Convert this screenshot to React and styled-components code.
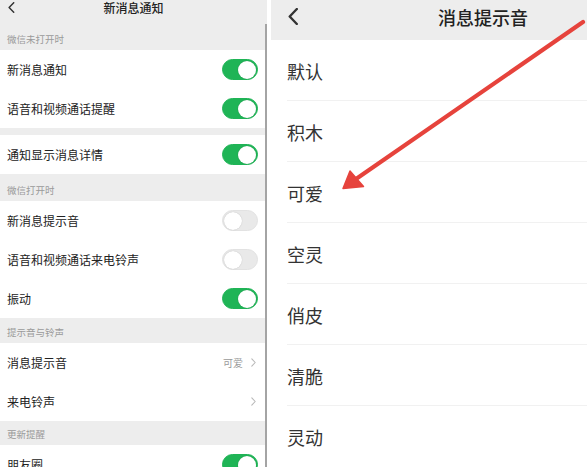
import React from 'react'
import styled, { createGlobalStyle } from 'styled-components';

const GlobalStyle = createGlobalStyle`
  html, body {
    margin: 0;
    padding: 0;
    background: #fff;
    font-family: "Noto Sans CJK SC", "Noto Sans", sans-serif;
  }
`;

const leftSections = [
  { label: '微信未打开时', h: 26, rows: [
    { text: '新消息通知', toggle: true },
    { text: '语音和视频通话提醒', toggle: true },
  ]},
  { gap: true, rows: [
    { text: '通知显示消息详情', toggle: true },
  ]},
  { label: '微信打开时', h: 27, rows: [
    { text: '新消息提示音', toggle: false },
    { text: '语音和视频通话来电铃声', toggle: false },
    { text: '振动', toggle: true },
  ]},
  { label: '提示音与铃声', h: 25, rows: [
    { text: '消息提示音', value: '可爱', link: true },
    { text: '来电铃声', link: true },
  ]},
  { label: '更新提醒', h: 24, rows: [
    { text: '朋友圈', toggle: true },
  ]},
];

const tones = ['默认', '积木', '可爱', '空灵', '俏皮', '清脆', '灵动'];

const Chevron = ({ size = 10, color = '#333', width = 1.6 }) => (
  <svg width={size * 0.6} height={size} viewBox="0 0 6 10" fill="none">
    <path d="M5.2 0.6 L1 5 L5.2 9.4" stroke={color} strokeWidth={width} strokeLinecap="round" strokeLinejoin="round"/>
  </svg>
);

const SmallArrow = () => (
  <svg width="5" height="9" viewBox="0 0 5 9" fill="none">
    <path d="M0.8 0.8 L4.2 4.5 L0.8 8.2" stroke="#b8b8b8" strokeWidth="1.1" strokeLinecap="round" strokeLinejoin="round"/>
  </svg>
);

const App = () => {
  return (
    <Page>
      <GlobalStyle />
      <LeftPanel>
        <LeftHeader>
          <BackLeft><Chevron size={11} color="#333" width={1.3} /></BackLeft>
          <LeftTitle>新消息通知</LeftTitle>
        </LeftHeader>
        <LeftBody>
          <SettingsList>
            {leftSections.map((section, i) => (
              <React.Fragment key={i}>
                {section.gap ? <Gap /> : <SectionLabel $h={section.h}>{section.label}</SectionLabel>}
                {section.rows.map((row) => (
                  <Row key={row.text}>
                    <RowText>{row.text}</RowText>
                    {row.toggle !== undefined && (
                      <Toggle $on={row.toggle}><Knob $on={row.toggle} /></Toggle>
                    )}
                    {row.link && (
                      <RowValue>
                        {row.value && <span>{row.value}</span>}
                        <SmallArrow />
                      </RowValue>
                    )}
                  </Row>
                ))}
              </React.Fragment>
            ))}
          </SettingsList>
          <Scrollbar />
        </LeftBody>
      </LeftPanel>

      <RightPanel>
        <RightHeader>
          <BackRight><Chevron size={17} color="#333" width={1.4} /></BackRight>
          <RightTitle>消息提示音</RightTitle>
        </RightHeader>
        <ToneList>
          {tones.map((t, i) => (
            <ToneRow key={t} $last={i === tones.length - 1}>{t}</ToneRow>
          ))}
        </ToneList>
      </RightPanel>

      <ArrowLayer width="587" height="467" viewBox="0 0 587 467">
        <line x1="583" y1="22" x2="356" y2="179" stroke="#e6433c" strokeWidth="4.2" strokeLinecap="round" />
        <polygon points="343,188.5 350,171 363.5,186.5" fill="#e6433c" stroke="#e6433c" strokeWidth="1.5" strokeLinejoin="round" />
      </ArrowLayer>
    </Page>
  )
}

export default App

const Page = styled.div`
  position: relative;
  width: 587px;
  height: 467px;
  overflow: hidden;
  display: flex;
  background: #fff;
`;

const LeftPanel = styled.div`
  width: 267px;
  flex-shrink: 0;
  display: flex;
  flex-direction: column;
  background: #ededed;
`;

const LeftHeader = styled.div`
  height: 24px;
  flex-shrink: 0;
  position: relative;
  display: flex;
  align-items: center;
  justify-content: center;
  background: #ededed;
`;

const BackLeft = styled.div`
  position: absolute;
  left: 8px;
  top: 2px;
  display: flex;
`;

const LeftTitle = styled.div`
  font-size: 12px;
  font-weight: 500;
  color: #222;
  line-height: 1;
  margin-top: -8px;
`;

const LeftBody = styled.div`
  flex: 1;
  display: flex;
  min-height: 0;
`;

const SettingsList = styled.div`
  width: 265px;
  display: flex;
  flex-direction: column;
`;

const Scrollbar = styled.div`
  width: 2px;
  background: #a4a4a4;
`;

const SectionLabel = styled.div`
  height: ${p => p.$h}px;
  flex-shrink: 0;
  display: flex;
  align-items: flex-end;
  padding: 0 0 6px 7px;
  box-sizing: border-box;
  font-size: 9.5px;
  color: #9a9a9a;
  background: #ededed;
  line-height: 1;
`;

const Gap = styled.div`
  height: 7px;
  flex-shrink: 0;
  background: #ededed;
`;

const Row = styled.div`
  height: 39px;
  flex-shrink: 0;
  display: flex;
  align-items: center;
  justify-content: space-between;
  padding: 0 7px 0 7px;
  box-sizing: border-box;
  background: #fff;
`;

const RowText = styled.div`
  font-size: 12px;
  color: #222;
`;

const RowValue = styled.div`
  display: flex;
  align-items: center;
  gap: 8px;
  padding-right: 2px;
  font-size: 10px;
  color: #9a9a9a;
`;

const Toggle = styled.div`
  width: 36px;
  height: 21px;
  border-radius: 11px;
  box-sizing: border-box;
  background: ${p => (p.$on ? '#1fb456' : '#e9e9e9')};
  border: 1px solid ${p => (p.$on ? '#1fb456' : '#e2e2e2')};
  display: flex;
  align-items: center;
  justify-content: ${p => (p.$on ? 'flex-end' : 'flex-start')};
  padding: 0 1px;
`;

const Knob = styled.div`
  width: 18px;
  height: 18px;
  border-radius: 50%;
  background: #fff;
  box-shadow: 0 0 1px rgba(0,0,0,0.25);
`;

const RightPanel = styled.div`
  flex: 1;
  margin-left: 4px;
  display: flex;
  flex-direction: column;
`;

const RightHeader = styled.div`
  height: 41px;
  position: relative;
  display: flex;
  align-items: center;
  justify-content: flex-end;
  padding-right: 59px;
  background: #ededed;
`;

const BackRight = styled.div`
  position: absolute;
  left: 17px;
  top: 8px;
  display: flex;
`;

const RightTitle = styled.div`
  font-size: 18px;
  font-weight: 500;
  color: #222;
  margin-top: -6px;
`;

const ToneList = styled.div`
  display: flex;
  flex-direction: column;
  padding-left: 16px;
`;

const ToneRow = styled.div`
  height: 61px;
  flex-shrink: 0;
  display: flex;
  align-items: center;
  font-size: 18px;
  color: #333;
  border-bottom: ${p => (p.$last ? 'none' : '1px solid #f1f1f1')};
  box-sizing: border-box;
  padding-top: 1px;
`;

const ArrowLayer = styled.svg`
  position: absolute;
  left: 0;
  top: 0;
  pointer-events: none;
`;
